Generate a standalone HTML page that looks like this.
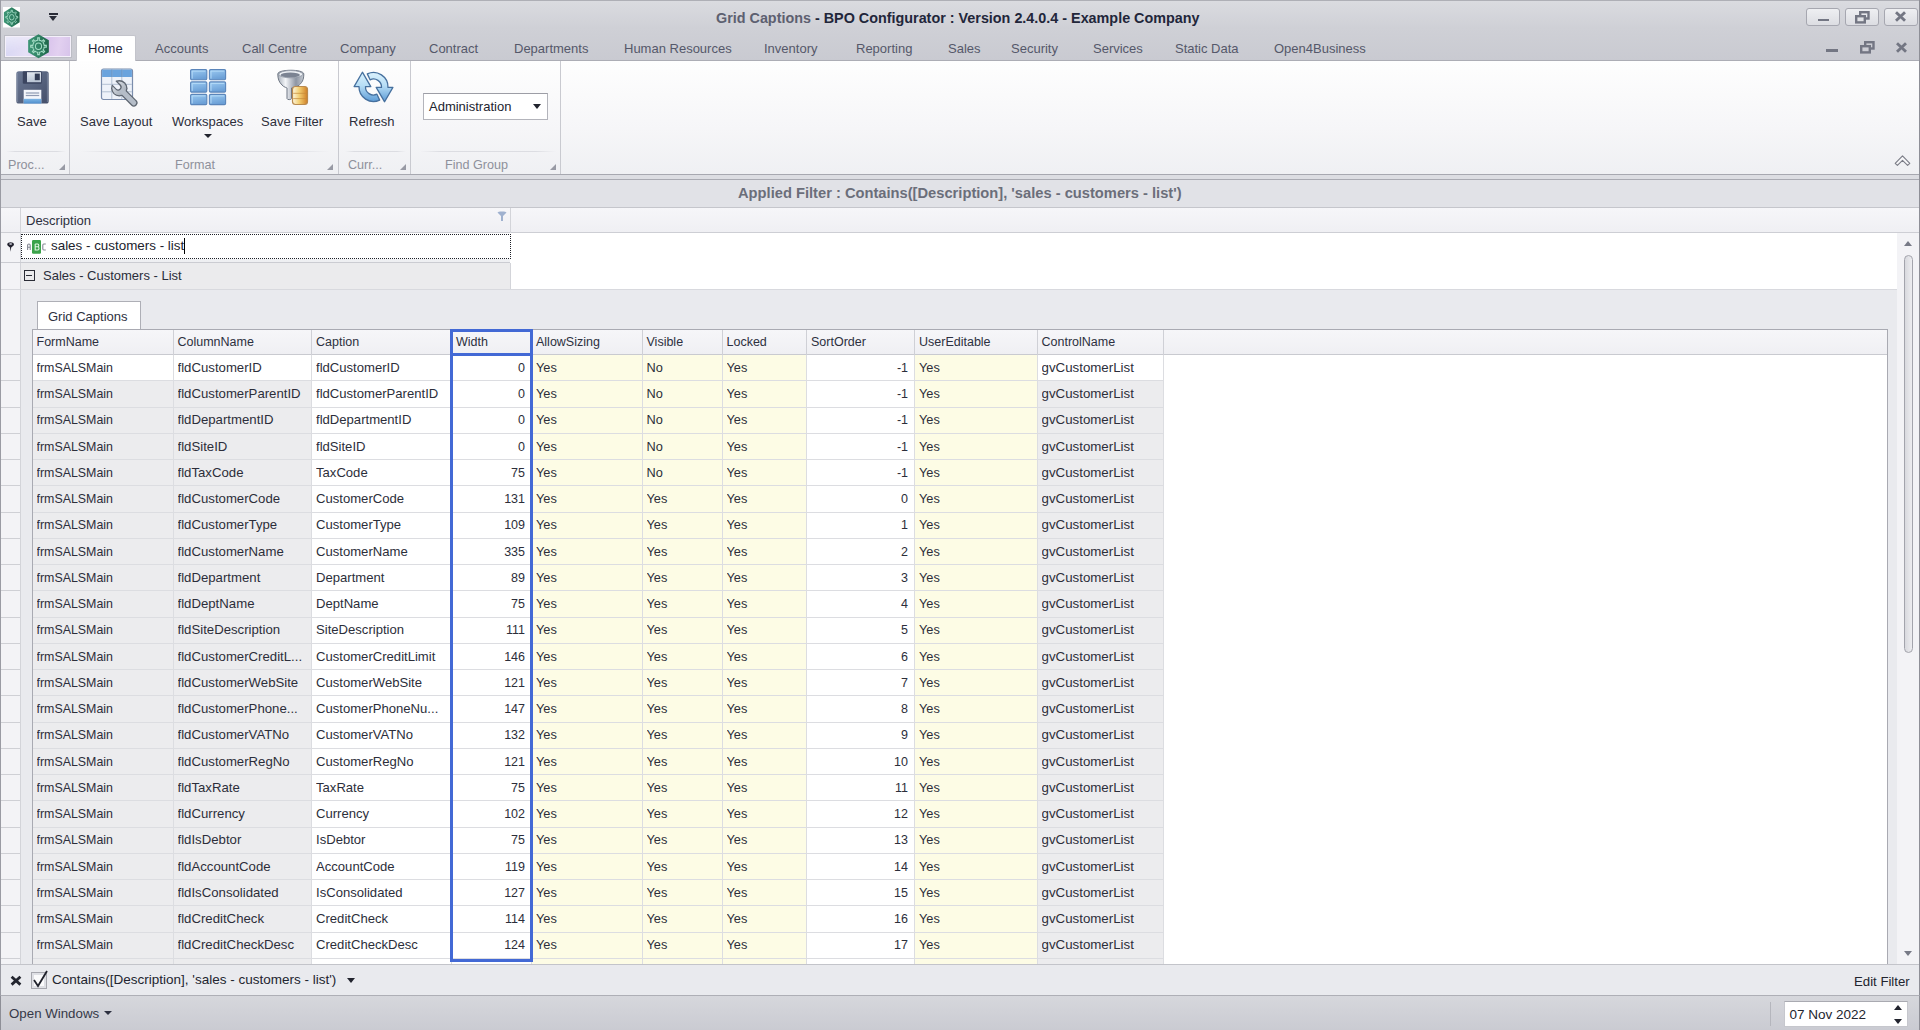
<!DOCTYPE html><html><head><meta charset="utf-8"><style>
*{box-sizing:border-box;margin:0;padding:0}
html,body{width:1920px;height:1030px;overflow:hidden;background:#e9eaee;font-family:"Liberation Sans",sans-serif;color:#20222c}
.abs{position:absolute}
.t{position:absolute;white-space:nowrap;line-height:1}
#title{left:0;top:0;width:1920px;height:61px;background:linear-gradient(#dadbe0,#cfd0d6 45%,#c9cad1);border-top:1px solid #aeafb6;border-left:1px solid #a9aab1;border-right:1px solid #a9aab1}
#tabline{left:0;top:60px;width:1920px;height:1px;background:#acadb5}
.tab{font-size:13px;color:#55586a;top:42px}
#ribbon{left:1px;top:61px;width:1918px;height:113px;background:linear-gradient(#fefefe,#f6f6f8 60%,#eff0f3)}
.rl{font-size:13px;color:#2d2f3b}
.gl{font-size:12.6px;color:#8e909b}
.sep{position:absolute;top:61px;width:1px;height:113px;background:#c9cad0}
.lsep{position:absolute;top:151px;height:1px;background:linear-gradient(90deg,rgba(220,221,226,0),#dcdde2 15%,#dcdde2 85%,rgba(220,221,226,0))}
.launch{position:absolute;width:0;height:0;border-left:6px solid transparent;border-bottom:6px solid #989aa4}
.cell{position:absolute;font-size:12.5px;white-space:nowrap;line-height:1;color:#2c2e3a}
</style></head><body>
<div id="title" class="abs"></div>
<div id="tabline" class="abs"></div>
<svg class="abs" style="left:2.5px;top:7px" width="17.5" height="20.5" viewBox="0 0 24 24" preserveAspectRatio="none"><rect x="0" y="0" width="24" height="24" fill="#fff"/><defs><linearGradient id="g1" x1="0" x2="1"><stop offset="0" stop-color="#3f9677"/><stop offset=".55" stop-color="#2e8062"/><stop offset="1" stop-color="#1d6448"/></linearGradient></defs><polygon points="12,0.3 22.8,6.2 22.8,17.8 12,23.7 1.2,17.8 1.2,6.2" fill="url(#g1)"/><polygon points="10.10,6.31 11.16,6.06 11.14,3.84 12.86,3.84 12.84,6.06 13.90,6.31 14.68,6.63 15.61,7.21 17.16,5.63 18.37,6.84 16.79,8.39 17.37,9.32 17.69,10.10 17.94,11.16 20.16,11.14 20.16,12.86 17.94,12.84 17.69,13.90 17.37,14.68 16.79,15.61 18.37,17.16 17.16,18.37 15.61,16.79 14.68,17.37 13.90,17.69 12.84,17.94 12.86,20.16 11.14,20.16 11.16,17.94 10.10,17.69 9.32,17.37 8.39,16.79 6.84,18.37 5.63,17.16 7.21,15.61 6.63,14.68 6.31,13.90 6.06,12.84 3.84,12.86 3.84,11.14 6.06,11.16 6.31,10.10 6.63,9.32 7.21,8.39 5.63,6.84 6.84,5.63 8.39,7.21 9.32,6.63" fill="none" stroke="#a4dcc5" stroke-width="1.1"/><circle cx="12" cy="12" r="3.2" fill="none" stroke="#a4dcc5" stroke-width="1.1"/></svg>
<div class="abs" style="left:49px;top:13px;width:9px;height:2px;background:#2a2c38"></div>
<div class="abs" style="left:49px;top:16px;width:0;height:0;border-left:4.5px solid transparent;border-right:4.5px solid transparent;border-top:5px solid #2a2c38"></div>
<div class="t" style="left:716px;top:10.5px;font-size:14.37px;font-weight:bold;color:#5d6070">Grid Captions <span style="color:#22263a">- BPO Configurator : Version 2.4.0.4 - Example Company</span></div>
<div class="abs" style="left:1806px;top:8px;width:34px;height:18px;border:1px solid #a6a7b0;border-radius:3px;background:linear-gradient(#eeeff2,#dcdde2)"></div>
<div class="abs" style="left:1844.5px;top:8px;width:34px;height:18px;border:1px solid #a6a7b0;border-radius:3px;background:linear-gradient(#eeeff2,#dcdde2)"></div>
<div class="abs" style="left:1883.5px;top:8px;width:34px;height:18px;border:1px solid #a6a7b0;border-radius:3px;background:linear-gradient(#eeeff2,#dcdde2)"></div>
<div class="abs" style="left:1817.5px;top:18.5px;width:11.5px;height:2.5px;background:#737683"></div>
<svg class="abs" style="left:1854px;top:10px" width="16" height="14"><rect x="6.2" y="2.2" width="8.3" height="6.3" fill="none" stroke="#737683" stroke-width="2.4"/><rect x="2.2" y="6.2" width="8.6" height="6.2" fill="#e2e3e7" stroke="#737683" stroke-width="2.4"/></svg>
<svg class="abs" style="left:1894px;top:11px" width="13" height="11"><path d="M2 1.3 L11 9.7 M11 1.3 L2 9.7" stroke="#737683" stroke-width="2.9"/></svg>
<div class="abs" style="left:1826px;top:49px;width:11.5px;height:2.5px;background:#737683"></div>
<svg class="abs" style="left:1859px;top:40px" width="16" height="14"><rect x="6.2" y="2.2" width="8.3" height="6.3" fill="none" stroke="#737683" stroke-width="2.4"/><rect x="2.2" y="6.2" width="8.6" height="6.2" fill="#cdced5" stroke="#737683" stroke-width="2.4"/></svg>
<svg class="abs" style="left:1895px;top:41.5px" width="13" height="11"><path d="M2 1.3 L11 9.7 M11 1.3 L2 9.7" stroke="#737683" stroke-width="2.9"/></svg>
<div class="abs" style="left:3.5px;top:34.5px;width:68px;height:23.5px;border:1px solid #bcbdc5;box-shadow:inset 0 0 0 1px #f4f0fa;background:linear-gradient(160deg,rgba(255,255,255,.5),rgba(255,255,255,0) 40%),linear-gradient(100deg,#d7d6f4,#e6e0f6 35%,#d9c4ec 62%,#e2d0f0 80%,#d6c3ea)"></div>
<svg class="abs" style="left:27px;top:34px" width="23" height="24.5" viewBox="0 0 24 24" preserveAspectRatio="none"><defs><linearGradient id="g2" x1="0" x2="1"><stop offset="0" stop-color="#3f9677"/><stop offset=".55" stop-color="#2e8062"/><stop offset="1" stop-color="#1d6448"/></linearGradient></defs><polygon points="12,0.3 22.8,6.2 22.8,17.8 12,23.7 1.2,17.8 1.2,6.2" fill="url(#g2)"/><polygon points="10.10,6.31 11.16,6.06 11.14,3.84 12.86,3.84 12.84,6.06 13.90,6.31 14.68,6.63 15.61,7.21 17.16,5.63 18.37,6.84 16.79,8.39 17.37,9.32 17.69,10.10 17.94,11.16 20.16,11.14 20.16,12.86 17.94,12.84 17.69,13.90 17.37,14.68 16.79,15.61 18.37,17.16 17.16,18.37 15.61,16.79 14.68,17.37 13.90,17.69 12.84,17.94 12.86,20.16 11.14,20.16 11.16,17.94 10.10,17.69 9.32,17.37 8.39,16.79 6.84,18.37 5.63,17.16 7.21,15.61 6.63,14.68 6.31,13.90 6.06,12.84 3.84,12.86 3.84,11.14 6.06,11.16 6.31,10.10 6.63,9.32 7.21,8.39 5.63,6.84 6.84,5.63 8.39,7.21 9.32,6.63" fill="none" stroke="#a4dcc5" stroke-width="1.1"/><circle cx="12" cy="12" r="3.2" fill="none" stroke="#a4dcc5" stroke-width="1.1"/></svg>
<div class="abs" style="left:75.5px;top:34.5px;width:60px;height:27px;background:#fff;border:1px solid #c3c4cb;border-bottom:none;border-radius:2px 2px 0 0"></div>
<div class="t tab" style="left:88px;color:#22263a">Home</div>
<div class="t tab" style="left:155px">Accounts</div>
<div class="t tab" style="left:242px">Call Centre</div>
<div class="t tab" style="left:340px">Company</div>
<div class="t tab" style="left:429px">Contract</div>
<div class="t tab" style="left:514px">Departments</div>
<div class="t tab" style="left:624px">Human Resources</div>
<div class="t tab" style="left:764px">Inventory</div>
<div class="t tab" style="left:856px">Reporting</div>
<div class="t tab" style="left:948px">Sales</div>
<div class="t tab" style="left:1011px">Security</div>
<div class="t tab" style="left:1093px">Services</div>
<div class="t tab" style="left:1175px">Static Data</div>
<div class="t tab" style="left:1274px">Open4Business</div>
<div id="ribbon" class="abs"></div>
<div class="sep" style="left:69px"></div>
<div class="sep" style="left:338px"></div>
<div class="sep" style="left:410px"></div>
<div class="sep" style="left:560px"></div>
<div class="abs" style="left:0;top:174px;width:1920px;height:1px;background:#a7a8b0"></div>
<div class="abs" style="left:0;top:175px;width:1920px;height:4px;background:#dcdde2"></div>
<div class="abs" style="left:0;top:179px;width:1920px;height:1px;background:#a9aab2"></div>
<div class="lsep" style="left:6px;width:60px"></div>
<div class="lsep" style="left:80px;width:250px"></div>
<div class="lsep" style="left:345px;width:61px"></div>
<div class="lsep" style="left:420px;width:136px"></div>
<div class="launch" style="left:59px;top:164px"></div>
<div class="launch" style="left:327px;top:164px"></div>
<div class="launch" style="left:400px;top:164px"></div>
<div class="launch" style="left:550px;top:164px"></div>
<div class="t gl" style="left:8px;top:158.5px">Proc...</div>
<div class="t gl" style="left:175px;top:158.5px">Format</div>
<div class="t gl" style="left:348px;top:158.5px">Curr...</div>
<div class="t gl" style="left:445px;top:158.5px">Find Group</div>
<div class="t rl" style="left:17px;top:115px">Save</div>
<div class="t rl" style="left:80px;top:115px">Save Layout</div>
<div class="t rl" style="left:172px;top:115px">Workspaces</div>
<div class="t rl" style="left:261px;top:115px">Save Filter</div>
<div class="t rl" style="left:349px;top:115px">Refresh</div>
<div class="abs" style="left:204px;top:134px;width:0;height:0;border-left:4px solid transparent;border-right:4px solid transparent;border-top:4.5px solid #22242e"></div>
<div class="abs" style="left:422.5px;top:92.5px;width:125px;height:27px;border:1px solid #b3b4bb;border-top-color:#9d9ea6;background:#fff"></div>
<div class="t" style="left:429px;top:100px;font-size:13px;color:#22242e">Administration</div>
<div class="abs" style="left:533px;top:104px;width:0;height:0;border-left:4px solid transparent;border-right:4px solid transparent;border-top:5px solid #22242e"></div>
<svg class="abs" style="left:1893px;top:153px" width="19" height="15"><path d="M2.2 10.3 L9.5 2.8 L16.8 10.3 L14.6 12.4 L9.5 7.4 L4.4 12.4 Z" fill="#f6f6f8" stroke="#7a7c86" stroke-width="1.1" stroke-linejoin="round"/></svg>
<svg class="abs" style="left:16px;top:71px" width="33" height="33" viewBox="0 0 33 33">
<defs><linearGradient id="fl" x1="0" y1="0" x2="1" y2="1"><stop offset="0" stop-color="#6b7894"/><stop offset=".5" stop-color="#58647f"/><stop offset="1" stop-color="#444e69"/></linearGradient>
<linearGradient id="sh" x1="0" y1="0" x2="0" y2="1"><stop offset="0" stop-color="#e2e8f0"/><stop offset="1" stop-color="#b9c4d4"/></linearGradient>
<linearGradient id="bl" x1="0" y1="0" x2="0" y2="1"><stop offset="0" stop-color="#7db6e6"/><stop offset="1" stop-color="#4f8dcc"/></linearGradient></defs>
<rect x="0.3" y="0.2" width="32.4" height="32.4" rx="2.6" fill="url(#fl)"/>
<path d="M1.6 2 V31 M31.4 2 V31" stroke="#8c98b0" stroke-width="0.8" opacity=".7"/>
<rect x="6.8" y="0.2" width="19" height="12.6" rx="1" fill="#3b4560"/>
<rect x="11" y="1.2" width="14" height="10" fill="url(#sh)"/>
<rect x="18.8" y="2.6" width="5" height="6.6" fill="#333c55"/>
<rect x="7.7" y="18.8" width="17.6" height="13.8" fill="#f3f6fb"/>
<rect x="9.8" y="21.4" width="13.4" height="1.2" fill="#8f9ab2"/>
<rect x="9.8" y="23.9" width="13.4" height="1.2" fill="#8f9ab2"/>
<rect x="7.7" y="27.8" width="17.6" height="4.8" fill="url(#bl)"/>
</svg>
<svg class="abs" style="left:100px;top:68px" width="40" height="40" viewBox="0 0 40 40">
<defs>
<linearGradient id="wr" x1="0" y1="0" x2="1" y2="1"><stop offset="0" stop-color="#e4e8ee"/><stop offset="1" stop-color="#9ba4af"/></linearGradient>
<mask id="m1" maskUnits="userSpaceOnUse" x="0" y="0" width="40" height="40"><rect width="40" height="40" fill="#fff"/><rect x="-2.3" y="-13" width="4.6" height="13.5" rx="2.3" fill="#000" transform="translate(19.3 20.3) rotate(-45)"/></mask>
<mask id="m2" maskUnits="userSpaceOnUse" x="0" y="0" width="40" height="40"><rect width="40" height="40" fill="#fff"/><rect x="-3.5" y="-14" width="7" height="15.8" rx="3.5" fill="#000" transform="translate(19.3 20.3) rotate(-45)"/></mask>
</defs>
<rect x="1.5" y="1" width="31" height="30.5" rx="2" fill="#eef2f9" stroke="#7b8dac" stroke-width="1.2"/>
<rect x="2.1" y="1.6" width="29.8" height="7.4" fill="#6aa3dd"/>
<path d="M11.8 1.6 V30.9 M21.8 1.6 V30.9 M2.1 16.3 H31.9 M2.1 23.8 H31.9" stroke="#b3c0d2" stroke-width="1"/>
<path d="M11.8 1.6 V9 M21.8 1.6 V9" stroke="#5a8fc8" stroke-width="1"/>
<g mask="url(#m1)"><circle cx="19.3" cy="20.3" r="8.2" fill="#5d6570"/><path d="M20 21 L33.8 34.8" stroke="#5d6570" stroke-width="7.4" stroke-linecap="round"/></g>
<g mask="url(#m2)"><circle cx="19.3" cy="20.3" r="6.9" fill="url(#wr)"/><path d="M20 21 L33.8 34.8" stroke="#b5bdc8" stroke-width="4.9" stroke-linecap="round"/></g>
</svg>
<svg class="abs" style="left:190px;top:69px" width="37" height="37"><defs><linearGradient id="wsg" x1="0" y1="0" x2="0.3" y2="1"><stop offset="0" stop-color="#9ccbf2"/><stop offset="1" stop-color="#6b9fd6"/></linearGradient></defs><rect x="0.6" y="0.6" width="16.2" height="10.2" rx="1.2" fill="url(#wsg)" stroke="#5a85ba" stroke-width="1.1"/><path d="M2.2 9.6 V2.1 H15.4" fill="none" stroke="#b8dcf8" stroke-width="0.9"/><rect x="19.4" y="0.6" width="16.2" height="10.2" rx="1.2" fill="url(#wsg)" stroke="#5a85ba" stroke-width="1.1"/><path d="M21.0 9.6 V2.1 H34.2" fill="none" stroke="#b8dcf8" stroke-width="0.9"/><rect x="0.6" y="12.9" width="16.2" height="10.2" rx="1.2" fill="url(#wsg)" stroke="#5a85ba" stroke-width="1.1"/><path d="M2.2 21.9 V14.4 H15.4" fill="none" stroke="#b8dcf8" stroke-width="0.9"/><rect x="19.4" y="12.9" width="16.2" height="10.2" rx="1.2" fill="url(#wsg)" stroke="#5a85ba" stroke-width="1.1"/><path d="M21.0 21.9 V14.4 H34.2" fill="none" stroke="#b8dcf8" stroke-width="0.9"/><rect x="0.6" y="25.4" width="16.2" height="10.2" rx="1.2" fill="url(#wsg)" stroke="#5a85ba" stroke-width="1.1"/><path d="M2.2 34.4 V26.9 H15.4" fill="none" stroke="#b8dcf8" stroke-width="0.9"/><rect x="19.4" y="25.4" width="16.2" height="10.2" rx="1.2" fill="url(#wsg)" stroke="#5a85ba" stroke-width="1.1"/><path d="M21.0 34.4 V26.9 H34.2" fill="none" stroke="#b8dcf8" stroke-width="0.9"/></svg>
<svg class="abs" style="left:276px;top:68px" width="34" height="39" viewBox="0 0 34 39">
<defs><linearGradient id="fn" x1="0" x2="1"><stop offset="0" stop-color="#a9b0ba"/><stop offset=".3" stop-color="#f3f5f8"/><stop offset=".7" stop-color="#8d95a3"/><stop offset="1" stop-color="#c5cad2"/></linearGradient>
<linearGradient id="db" x1="0" x2="1"><stop offset="0" stop-color="#fdf6df"/><stop offset=".45" stop-color="#f3cf72"/><stop offset="1" stop-color="#cf7e25"/></linearGradient></defs>
<path d="M1.8 6 C1.8 1 27.8 1 27.8 6 C27.8 12 26 15 22 18 C18 20 15.5 19.5 15.5 20 L15.5 30.5 C15.5 32 11 32 11 30.5 L11 20 C11 19.5 8 19.5 6 17 C3 14 1.8 11 1.8 6 Z" fill="url(#fn)" stroke="#6f7784" stroke-width="1"/>
<ellipse cx="14.8" cy="6.2" rx="12" ry="3.6" fill="#eef1f5" stroke="#8a92a0" stroke-width="0.8"/>
<ellipse cx="14.3" cy="7" rx="9.6" ry="2.4" fill="#7b8392"/>
<rect x="16.5" y="18.5" width="15" height="18" rx="3" fill="url(#db)" stroke="#b98a4e" stroke-width="1.2"/>
<path d="M17.2 25.3 H30.8 M17.2 30.6 H30.8" stroke="#c68a3a" stroke-width="0.9" opacity=".8"/>
</svg>
<svg class="abs" style="left:350px;top:66px" width="48" height="42" viewBox="0 0 48 42">
<defs><linearGradient id="rf" gradientUnits="userSpaceOnUse" x1="0" y1="-15" x2="0" y2="15"><stop offset="0" stop-color="#dcf2fd"/><stop offset=".45" stop-color="#b7def6"/><stop offset="1" stop-color="#5b9ad5"/></linearGradient></defs>
<g transform="translate(23.5 21)" fill="url(#rf)" stroke="#46709e" stroke-width="1.3" stroke-linejoin="round">
<path d="M-19.4 -0.4 L-11.1 -14.8 L-2.7 -0.4 L-8 -0.4 A8 8 0 0 0 3.4 7.2 L6.2 13.1 A14.5 14.5 0 0 1 -14.5 -0.4 Z"/>
<path d="M19.4 0.4 L11.1 14.8 L2.7 0.4 L8 0.4 A8 8 0 0 0 -3.4 -7.2 L-6.2 -13.1 A14.5 14.5 0 0 1 14.5 0.4 Z"/>
</g>
</svg>
<div class="abs" style="left:0;top:180px;width:1920px;height:28px;background:#e1e2e7;border-left:1px solid #8e8f97;border-right:1px solid #8e8f97"></div>
<div class="t" style="left:738px;top:186px;font-size:14.7px;font-weight:bold;color:#6b6e7a">Applied Filter : Contains([Description], 'sales - customers - list')</div>
<div class="abs" style="left:0;top:207px;width:1920px;height:1px;background:#c5c6cc"></div>
<div class="abs" style="left:1px;top:208px;width:1918px;height:25px;background:linear-gradient(#f6f6f9,#efeff3)"></div>
<div class="abs" style="left:1px;top:232px;width:1918px;height:1px;background:#cdced4"></div>
<div class="abs" style="left:20px;top:208px;width:1px;height:25px;background:#d3d4d9"></div>
<div class="abs" style="left:510px;top:208px;width:1px;height:25px;background:#d3d4d9"></div>
<div class="t" style="left:26px;top:214px;font-size:13px;color:#2d3040">Description</div>
<svg class="abs" style="left:497px;top:211px" width="10" height="11"><path d="M0.5 1.5 C0.5 0 9.5 0 9.5 1.5 L6 5 V10 H4 V5 Z" fill="#9fb1cf"/></svg>
<div class="abs" style="left:1px;top:233px;width:1896px;height:731px;background:#fff"></div>
<div class="abs" style="left:1px;top:233px;width:19px;height:731px;background:#f3f3f6"></div>
<div class="abs" style="left:20px;top:233px;width:1px;height:731px;background:#d3d4d9"></div>
<div class="abs" style="left:21px;top:233.5px;width:489.5px;height:25.5px;background:#fff"></div>
<div class="abs" style="left:21px;top:234px;width:489.5px;height:25px;border:1px dotted #1e2028"></div>
<div class="abs" style="left:21px;top:259px;width:489px;height:3.5px;background:#eeeff2"></div>
<div class="abs" style="left:1px;top:262.3px;width:509px;height:1px;background:#cbccd2"></div>
<svg class="abs" style="left:6px;top:240px" width="10" height="13"><path d="M1.2 4.4 C1.2 1.6 8 1.6 8 4.4 C8 6 5.6 6.6 5.2 7.4 L4.6 11.8 L4 7.4 C3.6 6.6 1.2 6 1.2 4.4 Z" fill="#22222e"/><ellipse cx="4.6" cy="3.9" rx="1.5" ry="0.75" fill="#dcdce6"/></svg>
<svg class="abs" style="left:26px;top:239px" width="22" height="16"><rect x="6" y="1" width="9" height="13.7" rx="1.2" fill="#3ba24a"/><path d="M1.6 11 L1.6 6.2 Q1.6 5 2.9 5 Q4.2 5 4.2 6.2 L4.2 11 M1.6 8.2 H4.2" fill="none" stroke="#858894" stroke-width="1.1"/><path d="M9.2 5 H11.6 Q12.8 5 12.8 6.4 Q12.8 7.8 11.6 7.8 H9.2 M9.2 7.8 H11.8 Q13 7.8 13 9.4 Q13 11 11.8 11 H9.2 Z M9.2 5 V11" fill="none" stroke="#e3f6e3" stroke-width="1.1"/><path d="M19.8 5 H17.8 Q16.8 5 16.8 6.2 V9.8 Q16.8 11 17.8 11 H19.8" fill="none" stroke="#858894" stroke-width="1.1"/></svg>
<div class="t" style="left:51px;top:239px;font-size:13.4px;color:#20222c">sales - customers - list</div>
<div class="abs" style="left:183.5px;top:238px;width:1px;height:16px;background:#000"></div>
<div class="abs" style="left:21px;top:263.3px;width:489px;height:25.5px;background:#ebebed"></div>
<div class="abs" style="left:510px;top:263px;width:1px;height:26px;background:#d3d4d9"></div>
<div class="abs" style="left:23.5px;top:269.7px;width:11.8px;height:11.8px;border:1.3px solid #2a2c36"></div>
<div class="abs" style="left:26.3px;top:275px;width:6.2px;height:1.3px;background:#2a2c36"></div>
<div class="t" style="left:43px;top:269px;font-size:13px;color:#2a2d3a">Sales - Customers - List</div>
<div class="abs" style="left:1px;top:288.5px;width:1896px;height:1px;background:#d8d9de"></div>
<div class="abs" style="left:21px;top:289.5px;width:1876px;height:675px;background:#e9eaee"></div>
<div class="abs" style="left:36.5px;top:301px;width:104.5px;height:29px;background:#fff;border:1px solid #aeafb6;border-bottom:none"></div>
<div class="t" style="left:48px;top:310px;font-size:13px;color:#2d3040">Grid Captions</div>
<div class="abs" style="left:32px;top:329px;width:1856px;height:636px;background:#fff;border:1px solid #a9aab2;border-bottom:none"></div>
<div class="abs" style="left:33px;top:330px;width:1854px;height:24.5px;background:linear-gradient(#f6f6f9,#efeff3)"></div>
<div class="abs" style="left:33px;top:354px;width:1854px;height:1px;background:#c9cad0"></div>
<div class="abs" style="left:532px;top:355.00px;width:109.5px;height:26.25px;background:#fdfce5"></div>
<div class="abs" style="left:642.5px;top:355.00px;width:79.0px;height:26.25px;background:#fdfce5"></div>
<div class="abs" style="left:722.5px;top:355.00px;width:83.5px;height:26.25px;background:#fdfce5"></div>
<div class="abs" style="left:915px;top:355.00px;width:121.5px;height:26.25px;background:#fdfce5"></div>
<div class="abs" style="left:32.5px;top:381.25px;width:140.0px;height:26.25px;background:#ececee"></div>
<div class="abs" style="left:173.5px;top:381.25px;width:137.5px;height:26.25px;background:#ececee"></div>
<div class="abs" style="left:532px;top:381.25px;width:109.5px;height:26.25px;background:#fdfce5"></div>
<div class="abs" style="left:642.5px;top:381.25px;width:79.0px;height:26.25px;background:#fdfce5"></div>
<div class="abs" style="left:722.5px;top:381.25px;width:83.5px;height:26.25px;background:#fdfce5"></div>
<div class="abs" style="left:915px;top:381.25px;width:121.5px;height:26.25px;background:#fdfce5"></div>
<div class="abs" style="left:1037.5px;top:381.25px;width:125.0px;height:26.25px;background:#ececee"></div>
<div class="abs" style="left:32.5px;top:407.50px;width:140.0px;height:26.25px;background:#ececee"></div>
<div class="abs" style="left:173.5px;top:407.50px;width:137.5px;height:26.25px;background:#ececee"></div>
<div class="abs" style="left:532px;top:407.50px;width:109.5px;height:26.25px;background:#fdfce5"></div>
<div class="abs" style="left:642.5px;top:407.50px;width:79.0px;height:26.25px;background:#fdfce5"></div>
<div class="abs" style="left:722.5px;top:407.50px;width:83.5px;height:26.25px;background:#fdfce5"></div>
<div class="abs" style="left:915px;top:407.50px;width:121.5px;height:26.25px;background:#fdfce5"></div>
<div class="abs" style="left:1037.5px;top:407.50px;width:125.0px;height:26.25px;background:#ececee"></div>
<div class="abs" style="left:32.5px;top:433.75px;width:140.0px;height:26.25px;background:#ececee"></div>
<div class="abs" style="left:173.5px;top:433.75px;width:137.5px;height:26.25px;background:#ececee"></div>
<div class="abs" style="left:532px;top:433.75px;width:109.5px;height:26.25px;background:#fdfce5"></div>
<div class="abs" style="left:642.5px;top:433.75px;width:79.0px;height:26.25px;background:#fdfce5"></div>
<div class="abs" style="left:722.5px;top:433.75px;width:83.5px;height:26.25px;background:#fdfce5"></div>
<div class="abs" style="left:915px;top:433.75px;width:121.5px;height:26.25px;background:#fdfce5"></div>
<div class="abs" style="left:1037.5px;top:433.75px;width:125.0px;height:26.25px;background:#ececee"></div>
<div class="abs" style="left:32.5px;top:460.00px;width:140.0px;height:26.25px;background:#ececee"></div>
<div class="abs" style="left:173.5px;top:460.00px;width:137.5px;height:26.25px;background:#ececee"></div>
<div class="abs" style="left:532px;top:460.00px;width:109.5px;height:26.25px;background:#fdfce5"></div>
<div class="abs" style="left:642.5px;top:460.00px;width:79.0px;height:26.25px;background:#fdfce5"></div>
<div class="abs" style="left:722.5px;top:460.00px;width:83.5px;height:26.25px;background:#fdfce5"></div>
<div class="abs" style="left:915px;top:460.00px;width:121.5px;height:26.25px;background:#fdfce5"></div>
<div class="abs" style="left:1037.5px;top:460.00px;width:125.0px;height:26.25px;background:#ececee"></div>
<div class="abs" style="left:32.5px;top:486.25px;width:140.0px;height:26.25px;background:#ececee"></div>
<div class="abs" style="left:173.5px;top:486.25px;width:137.5px;height:26.25px;background:#ececee"></div>
<div class="abs" style="left:532px;top:486.25px;width:109.5px;height:26.25px;background:#fdfce5"></div>
<div class="abs" style="left:642.5px;top:486.25px;width:79.0px;height:26.25px;background:#fdfce5"></div>
<div class="abs" style="left:722.5px;top:486.25px;width:83.5px;height:26.25px;background:#fdfce5"></div>
<div class="abs" style="left:915px;top:486.25px;width:121.5px;height:26.25px;background:#fdfce5"></div>
<div class="abs" style="left:1037.5px;top:486.25px;width:125.0px;height:26.25px;background:#ececee"></div>
<div class="abs" style="left:32.5px;top:512.50px;width:140.0px;height:26.25px;background:#ececee"></div>
<div class="abs" style="left:173.5px;top:512.50px;width:137.5px;height:26.25px;background:#ececee"></div>
<div class="abs" style="left:532px;top:512.50px;width:109.5px;height:26.25px;background:#fdfce5"></div>
<div class="abs" style="left:642.5px;top:512.50px;width:79.0px;height:26.25px;background:#fdfce5"></div>
<div class="abs" style="left:722.5px;top:512.50px;width:83.5px;height:26.25px;background:#fdfce5"></div>
<div class="abs" style="left:915px;top:512.50px;width:121.5px;height:26.25px;background:#fdfce5"></div>
<div class="abs" style="left:1037.5px;top:512.50px;width:125.0px;height:26.25px;background:#ececee"></div>
<div class="abs" style="left:32.5px;top:538.75px;width:140.0px;height:26.25px;background:#ececee"></div>
<div class="abs" style="left:173.5px;top:538.75px;width:137.5px;height:26.25px;background:#ececee"></div>
<div class="abs" style="left:532px;top:538.75px;width:109.5px;height:26.25px;background:#fdfce5"></div>
<div class="abs" style="left:642.5px;top:538.75px;width:79.0px;height:26.25px;background:#fdfce5"></div>
<div class="abs" style="left:722.5px;top:538.75px;width:83.5px;height:26.25px;background:#fdfce5"></div>
<div class="abs" style="left:915px;top:538.75px;width:121.5px;height:26.25px;background:#fdfce5"></div>
<div class="abs" style="left:1037.5px;top:538.75px;width:125.0px;height:26.25px;background:#ececee"></div>
<div class="abs" style="left:32.5px;top:565.00px;width:140.0px;height:26.25px;background:#ececee"></div>
<div class="abs" style="left:173.5px;top:565.00px;width:137.5px;height:26.25px;background:#ececee"></div>
<div class="abs" style="left:532px;top:565.00px;width:109.5px;height:26.25px;background:#fdfce5"></div>
<div class="abs" style="left:642.5px;top:565.00px;width:79.0px;height:26.25px;background:#fdfce5"></div>
<div class="abs" style="left:722.5px;top:565.00px;width:83.5px;height:26.25px;background:#fdfce5"></div>
<div class="abs" style="left:915px;top:565.00px;width:121.5px;height:26.25px;background:#fdfce5"></div>
<div class="abs" style="left:1037.5px;top:565.00px;width:125.0px;height:26.25px;background:#ececee"></div>
<div class="abs" style="left:32.5px;top:591.25px;width:140.0px;height:26.25px;background:#ececee"></div>
<div class="abs" style="left:173.5px;top:591.25px;width:137.5px;height:26.25px;background:#ececee"></div>
<div class="abs" style="left:532px;top:591.25px;width:109.5px;height:26.25px;background:#fdfce5"></div>
<div class="abs" style="left:642.5px;top:591.25px;width:79.0px;height:26.25px;background:#fdfce5"></div>
<div class="abs" style="left:722.5px;top:591.25px;width:83.5px;height:26.25px;background:#fdfce5"></div>
<div class="abs" style="left:915px;top:591.25px;width:121.5px;height:26.25px;background:#fdfce5"></div>
<div class="abs" style="left:1037.5px;top:591.25px;width:125.0px;height:26.25px;background:#ececee"></div>
<div class="abs" style="left:32.5px;top:617.50px;width:140.0px;height:26.25px;background:#ececee"></div>
<div class="abs" style="left:173.5px;top:617.50px;width:137.5px;height:26.25px;background:#ececee"></div>
<div class="abs" style="left:532px;top:617.50px;width:109.5px;height:26.25px;background:#fdfce5"></div>
<div class="abs" style="left:642.5px;top:617.50px;width:79.0px;height:26.25px;background:#fdfce5"></div>
<div class="abs" style="left:722.5px;top:617.50px;width:83.5px;height:26.25px;background:#fdfce5"></div>
<div class="abs" style="left:915px;top:617.50px;width:121.5px;height:26.25px;background:#fdfce5"></div>
<div class="abs" style="left:1037.5px;top:617.50px;width:125.0px;height:26.25px;background:#ececee"></div>
<div class="abs" style="left:32.5px;top:643.75px;width:140.0px;height:26.25px;background:#ececee"></div>
<div class="abs" style="left:173.5px;top:643.75px;width:137.5px;height:26.25px;background:#ececee"></div>
<div class="abs" style="left:532px;top:643.75px;width:109.5px;height:26.25px;background:#fdfce5"></div>
<div class="abs" style="left:642.5px;top:643.75px;width:79.0px;height:26.25px;background:#fdfce5"></div>
<div class="abs" style="left:722.5px;top:643.75px;width:83.5px;height:26.25px;background:#fdfce5"></div>
<div class="abs" style="left:915px;top:643.75px;width:121.5px;height:26.25px;background:#fdfce5"></div>
<div class="abs" style="left:1037.5px;top:643.75px;width:125.0px;height:26.25px;background:#ececee"></div>
<div class="abs" style="left:32.5px;top:670.00px;width:140.0px;height:26.25px;background:#ececee"></div>
<div class="abs" style="left:173.5px;top:670.00px;width:137.5px;height:26.25px;background:#ececee"></div>
<div class="abs" style="left:532px;top:670.00px;width:109.5px;height:26.25px;background:#fdfce5"></div>
<div class="abs" style="left:642.5px;top:670.00px;width:79.0px;height:26.25px;background:#fdfce5"></div>
<div class="abs" style="left:722.5px;top:670.00px;width:83.5px;height:26.25px;background:#fdfce5"></div>
<div class="abs" style="left:915px;top:670.00px;width:121.5px;height:26.25px;background:#fdfce5"></div>
<div class="abs" style="left:1037.5px;top:670.00px;width:125.0px;height:26.25px;background:#ececee"></div>
<div class="abs" style="left:32.5px;top:696.25px;width:140.0px;height:26.25px;background:#ececee"></div>
<div class="abs" style="left:173.5px;top:696.25px;width:137.5px;height:26.25px;background:#ececee"></div>
<div class="abs" style="left:532px;top:696.25px;width:109.5px;height:26.25px;background:#fdfce5"></div>
<div class="abs" style="left:642.5px;top:696.25px;width:79.0px;height:26.25px;background:#fdfce5"></div>
<div class="abs" style="left:722.5px;top:696.25px;width:83.5px;height:26.25px;background:#fdfce5"></div>
<div class="abs" style="left:915px;top:696.25px;width:121.5px;height:26.25px;background:#fdfce5"></div>
<div class="abs" style="left:1037.5px;top:696.25px;width:125.0px;height:26.25px;background:#ececee"></div>
<div class="abs" style="left:32.5px;top:722.50px;width:140.0px;height:26.25px;background:#ececee"></div>
<div class="abs" style="left:173.5px;top:722.50px;width:137.5px;height:26.25px;background:#ececee"></div>
<div class="abs" style="left:532px;top:722.50px;width:109.5px;height:26.25px;background:#fdfce5"></div>
<div class="abs" style="left:642.5px;top:722.50px;width:79.0px;height:26.25px;background:#fdfce5"></div>
<div class="abs" style="left:722.5px;top:722.50px;width:83.5px;height:26.25px;background:#fdfce5"></div>
<div class="abs" style="left:915px;top:722.50px;width:121.5px;height:26.25px;background:#fdfce5"></div>
<div class="abs" style="left:1037.5px;top:722.50px;width:125.0px;height:26.25px;background:#ececee"></div>
<div class="abs" style="left:32.5px;top:748.75px;width:140.0px;height:26.25px;background:#ececee"></div>
<div class="abs" style="left:173.5px;top:748.75px;width:137.5px;height:26.25px;background:#ececee"></div>
<div class="abs" style="left:532px;top:748.75px;width:109.5px;height:26.25px;background:#fdfce5"></div>
<div class="abs" style="left:642.5px;top:748.75px;width:79.0px;height:26.25px;background:#fdfce5"></div>
<div class="abs" style="left:722.5px;top:748.75px;width:83.5px;height:26.25px;background:#fdfce5"></div>
<div class="abs" style="left:915px;top:748.75px;width:121.5px;height:26.25px;background:#fdfce5"></div>
<div class="abs" style="left:1037.5px;top:748.75px;width:125.0px;height:26.25px;background:#ececee"></div>
<div class="abs" style="left:32.5px;top:775.00px;width:140.0px;height:26.25px;background:#ececee"></div>
<div class="abs" style="left:173.5px;top:775.00px;width:137.5px;height:26.25px;background:#ececee"></div>
<div class="abs" style="left:532px;top:775.00px;width:109.5px;height:26.25px;background:#fdfce5"></div>
<div class="abs" style="left:642.5px;top:775.00px;width:79.0px;height:26.25px;background:#fdfce5"></div>
<div class="abs" style="left:722.5px;top:775.00px;width:83.5px;height:26.25px;background:#fdfce5"></div>
<div class="abs" style="left:915px;top:775.00px;width:121.5px;height:26.25px;background:#fdfce5"></div>
<div class="abs" style="left:1037.5px;top:775.00px;width:125.0px;height:26.25px;background:#ececee"></div>
<div class="abs" style="left:32.5px;top:801.25px;width:140.0px;height:26.25px;background:#ececee"></div>
<div class="abs" style="left:173.5px;top:801.25px;width:137.5px;height:26.25px;background:#ececee"></div>
<div class="abs" style="left:532px;top:801.25px;width:109.5px;height:26.25px;background:#fdfce5"></div>
<div class="abs" style="left:642.5px;top:801.25px;width:79.0px;height:26.25px;background:#fdfce5"></div>
<div class="abs" style="left:722.5px;top:801.25px;width:83.5px;height:26.25px;background:#fdfce5"></div>
<div class="abs" style="left:915px;top:801.25px;width:121.5px;height:26.25px;background:#fdfce5"></div>
<div class="abs" style="left:1037.5px;top:801.25px;width:125.0px;height:26.25px;background:#ececee"></div>
<div class="abs" style="left:32.5px;top:827.50px;width:140.0px;height:26.25px;background:#ececee"></div>
<div class="abs" style="left:173.5px;top:827.50px;width:137.5px;height:26.25px;background:#ececee"></div>
<div class="abs" style="left:532px;top:827.50px;width:109.5px;height:26.25px;background:#fdfce5"></div>
<div class="abs" style="left:642.5px;top:827.50px;width:79.0px;height:26.25px;background:#fdfce5"></div>
<div class="abs" style="left:722.5px;top:827.50px;width:83.5px;height:26.25px;background:#fdfce5"></div>
<div class="abs" style="left:915px;top:827.50px;width:121.5px;height:26.25px;background:#fdfce5"></div>
<div class="abs" style="left:1037.5px;top:827.50px;width:125.0px;height:26.25px;background:#ececee"></div>
<div class="abs" style="left:32.5px;top:853.75px;width:140.0px;height:26.25px;background:#ececee"></div>
<div class="abs" style="left:173.5px;top:853.75px;width:137.5px;height:26.25px;background:#ececee"></div>
<div class="abs" style="left:532px;top:853.75px;width:109.5px;height:26.25px;background:#fdfce5"></div>
<div class="abs" style="left:642.5px;top:853.75px;width:79.0px;height:26.25px;background:#fdfce5"></div>
<div class="abs" style="left:722.5px;top:853.75px;width:83.5px;height:26.25px;background:#fdfce5"></div>
<div class="abs" style="left:915px;top:853.75px;width:121.5px;height:26.25px;background:#fdfce5"></div>
<div class="abs" style="left:1037.5px;top:853.75px;width:125.0px;height:26.25px;background:#ececee"></div>
<div class="abs" style="left:32.5px;top:880.00px;width:140.0px;height:26.25px;background:#ececee"></div>
<div class="abs" style="left:173.5px;top:880.00px;width:137.5px;height:26.25px;background:#ececee"></div>
<div class="abs" style="left:532px;top:880.00px;width:109.5px;height:26.25px;background:#fdfce5"></div>
<div class="abs" style="left:642.5px;top:880.00px;width:79.0px;height:26.25px;background:#fdfce5"></div>
<div class="abs" style="left:722.5px;top:880.00px;width:83.5px;height:26.25px;background:#fdfce5"></div>
<div class="abs" style="left:915px;top:880.00px;width:121.5px;height:26.25px;background:#fdfce5"></div>
<div class="abs" style="left:1037.5px;top:880.00px;width:125.0px;height:26.25px;background:#ececee"></div>
<div class="abs" style="left:32.5px;top:906.25px;width:140.0px;height:26.25px;background:#ececee"></div>
<div class="abs" style="left:173.5px;top:906.25px;width:137.5px;height:26.25px;background:#ececee"></div>
<div class="abs" style="left:532px;top:906.25px;width:109.5px;height:26.25px;background:#fdfce5"></div>
<div class="abs" style="left:642.5px;top:906.25px;width:79.0px;height:26.25px;background:#fdfce5"></div>
<div class="abs" style="left:722.5px;top:906.25px;width:83.5px;height:26.25px;background:#fdfce5"></div>
<div class="abs" style="left:915px;top:906.25px;width:121.5px;height:26.25px;background:#fdfce5"></div>
<div class="abs" style="left:1037.5px;top:906.25px;width:125.0px;height:26.25px;background:#ececee"></div>
<div class="abs" style="left:32.5px;top:932.50px;width:140.0px;height:26.25px;background:#ececee"></div>
<div class="abs" style="left:173.5px;top:932.50px;width:137.5px;height:26.25px;background:#ececee"></div>
<div class="abs" style="left:532px;top:932.50px;width:109.5px;height:26.25px;background:#fdfce5"></div>
<div class="abs" style="left:642.5px;top:932.50px;width:79.0px;height:26.25px;background:#fdfce5"></div>
<div class="abs" style="left:722.5px;top:932.50px;width:83.5px;height:26.25px;background:#fdfce5"></div>
<div class="abs" style="left:915px;top:932.50px;width:121.5px;height:26.25px;background:#fdfce5"></div>
<div class="abs" style="left:1037.5px;top:932.50px;width:125.0px;height:26.25px;background:#ececee"></div>
<div class="abs" style="left:32.5px;top:958.75px;width:140.0px;height:5.25px;background:#ececee"></div>
<div class="abs" style="left:173.5px;top:958.75px;width:137.5px;height:5.25px;background:#ececee"></div>
<div class="abs" style="left:532px;top:958.75px;width:109.5px;height:5.25px;background:#fdfce5"></div>
<div class="abs" style="left:642.5px;top:958.75px;width:79.0px;height:5.25px;background:#fdfce5"></div>
<div class="abs" style="left:722.5px;top:958.75px;width:83.5px;height:5.25px;background:#fdfce5"></div>
<div class="abs" style="left:915px;top:958.75px;width:121.5px;height:5.25px;background:#fdfce5"></div>
<div class="abs" style="left:1037.5px;top:958.75px;width:125.0px;height:5.25px;background:#ececee"></div>
<div class="abs" style="left:33px;top:380.25px;width:1129.5px;height:1px;background:#dcdde1"></div>
<div class="abs" style="left:33px;top:406.50px;width:1129.5px;height:1px;background:#dcdde1"></div>
<div class="abs" style="left:33px;top:432.75px;width:1129.5px;height:1px;background:#dcdde1"></div>
<div class="abs" style="left:33px;top:459.00px;width:1129.5px;height:1px;background:#dcdde1"></div>
<div class="abs" style="left:33px;top:485.25px;width:1129.5px;height:1px;background:#dcdde1"></div>
<div class="abs" style="left:33px;top:511.50px;width:1129.5px;height:1px;background:#dcdde1"></div>
<div class="abs" style="left:33px;top:537.75px;width:1129.5px;height:1px;background:#dcdde1"></div>
<div class="abs" style="left:33px;top:564.00px;width:1129.5px;height:1px;background:#dcdde1"></div>
<div class="abs" style="left:33px;top:590.25px;width:1129.5px;height:1px;background:#dcdde1"></div>
<div class="abs" style="left:33px;top:616.50px;width:1129.5px;height:1px;background:#dcdde1"></div>
<div class="abs" style="left:33px;top:642.75px;width:1129.5px;height:1px;background:#dcdde1"></div>
<div class="abs" style="left:33px;top:669.00px;width:1129.5px;height:1px;background:#dcdde1"></div>
<div class="abs" style="left:33px;top:695.25px;width:1129.5px;height:1px;background:#dcdde1"></div>
<div class="abs" style="left:33px;top:721.50px;width:1129.5px;height:1px;background:#dcdde1"></div>
<div class="abs" style="left:33px;top:747.75px;width:1129.5px;height:1px;background:#dcdde1"></div>
<div class="abs" style="left:33px;top:774.00px;width:1129.5px;height:1px;background:#dcdde1"></div>
<div class="abs" style="left:33px;top:800.25px;width:1129.5px;height:1px;background:#dcdde1"></div>
<div class="abs" style="left:33px;top:826.50px;width:1129.5px;height:1px;background:#dcdde1"></div>
<div class="abs" style="left:33px;top:852.75px;width:1129.5px;height:1px;background:#dcdde1"></div>
<div class="abs" style="left:33px;top:879.00px;width:1129.5px;height:1px;background:#dcdde1"></div>
<div class="abs" style="left:33px;top:905.25px;width:1129.5px;height:1px;background:#dcdde1"></div>
<div class="abs" style="left:33px;top:931.50px;width:1129.5px;height:1px;background:#dcdde1"></div>
<div class="abs" style="left:33px;top:957.75px;width:1129.5px;height:1px;background:#dcdde1"></div>
<div class="abs" style="left:1px;top:354px;width:19px;height:1px;background:#cfd0d5"></div>
<div class="abs" style="left:1px;top:380.25px;width:19px;height:1px;background:#cfd0d5"></div>
<div class="abs" style="left:1px;top:406.50px;width:19px;height:1px;background:#cfd0d5"></div>
<div class="abs" style="left:1px;top:432.75px;width:19px;height:1px;background:#cfd0d5"></div>
<div class="abs" style="left:1px;top:459.00px;width:19px;height:1px;background:#cfd0d5"></div>
<div class="abs" style="left:1px;top:485.25px;width:19px;height:1px;background:#cfd0d5"></div>
<div class="abs" style="left:1px;top:511.50px;width:19px;height:1px;background:#cfd0d5"></div>
<div class="abs" style="left:1px;top:537.75px;width:19px;height:1px;background:#cfd0d5"></div>
<div class="abs" style="left:1px;top:564.00px;width:19px;height:1px;background:#cfd0d5"></div>
<div class="abs" style="left:1px;top:590.25px;width:19px;height:1px;background:#cfd0d5"></div>
<div class="abs" style="left:1px;top:616.50px;width:19px;height:1px;background:#cfd0d5"></div>
<div class="abs" style="left:1px;top:642.75px;width:19px;height:1px;background:#cfd0d5"></div>
<div class="abs" style="left:1px;top:669.00px;width:19px;height:1px;background:#cfd0d5"></div>
<div class="abs" style="left:1px;top:695.25px;width:19px;height:1px;background:#cfd0d5"></div>
<div class="abs" style="left:1px;top:721.50px;width:19px;height:1px;background:#cfd0d5"></div>
<div class="abs" style="left:1px;top:747.75px;width:19px;height:1px;background:#cfd0d5"></div>
<div class="abs" style="left:1px;top:774.00px;width:19px;height:1px;background:#cfd0d5"></div>
<div class="abs" style="left:1px;top:800.25px;width:19px;height:1px;background:#cfd0d5"></div>
<div class="abs" style="left:1px;top:826.50px;width:19px;height:1px;background:#cfd0d5"></div>
<div class="abs" style="left:1px;top:852.75px;width:19px;height:1px;background:#cfd0d5"></div>
<div class="abs" style="left:1px;top:879.00px;width:19px;height:1px;background:#cfd0d5"></div>
<div class="abs" style="left:1px;top:905.25px;width:19px;height:1px;background:#cfd0d5"></div>
<div class="abs" style="left:1px;top:931.50px;width:19px;height:1px;background:#cfd0d5"></div>
<div class="abs" style="left:1px;top:957.75px;width:19px;height:1px;background:#cfd0d5"></div>
<div class="abs" style="left:172.5px;top:330px;width:1px;height:634px;background:#dcdde1"></div>
<div class="abs" style="left:172.5px;top:330px;width:1px;height:24.5px;background:#cfd0d6"></div>
<div class="abs" style="left:311px;top:330px;width:1px;height:634px;background:#dcdde1"></div>
<div class="abs" style="left:311px;top:330px;width:1px;height:24.5px;background:#cfd0d6"></div>
<div class="abs" style="left:451px;top:330px;width:1px;height:634px;background:#dcdde1"></div>
<div class="abs" style="left:451px;top:330px;width:1px;height:24.5px;background:#cfd0d6"></div>
<div class="abs" style="left:531px;top:330px;width:1px;height:634px;background:#dcdde1"></div>
<div class="abs" style="left:531px;top:330px;width:1px;height:24.5px;background:#cfd0d6"></div>
<div class="abs" style="left:641.5px;top:330px;width:1px;height:634px;background:#dcdde1"></div>
<div class="abs" style="left:641.5px;top:330px;width:1px;height:24.5px;background:#cfd0d6"></div>
<div class="abs" style="left:721.5px;top:330px;width:1px;height:634px;background:#dcdde1"></div>
<div class="abs" style="left:721.5px;top:330px;width:1px;height:24.5px;background:#cfd0d6"></div>
<div class="abs" style="left:806px;top:330px;width:1px;height:634px;background:#dcdde1"></div>
<div class="abs" style="left:806px;top:330px;width:1px;height:24.5px;background:#cfd0d6"></div>
<div class="abs" style="left:914px;top:330px;width:1px;height:634px;background:#dcdde1"></div>
<div class="abs" style="left:914px;top:330px;width:1px;height:24.5px;background:#cfd0d6"></div>
<div class="abs" style="left:1036.5px;top:330px;width:1px;height:634px;background:#dcdde1"></div>
<div class="abs" style="left:1036.5px;top:330px;width:1px;height:24.5px;background:#cfd0d6"></div>
<div class="abs" style="left:1162.5px;top:330px;width:1px;height:634px;background:#dcdde1"></div>
<div class="abs" style="left:1162.5px;top:330px;width:1px;height:24.5px;background:#cfd0d6"></div>
<div class="cell" style="left:36.5px;top:336px;color:#2d3040">FormName</div>
<div class="cell" style="left:177.5px;top:336px;color:#2d3040">ColumnName</div>
<div class="cell" style="left:316px;top:336px;color:#2d3040">Caption</div>
<div class="cell" style="left:456px;top:336px;color:#2d3040">Width</div>
<div class="cell" style="left:536px;top:336px;color:#2d3040">AllowSizing</div>
<div class="cell" style="left:646.5px;top:336px;color:#2d3040">Visible</div>
<div class="cell" style="left:726.5px;top:336px;color:#2d3040">Locked</div>
<div class="cell" style="left:811px;top:336px;color:#2d3040">SortOrder</div>
<div class="cell" style="left:919px;top:336px;color:#2d3040">UserEditable</div>
<div class="cell" style="left:1041.5px;top:336px;color:#2d3040">ControlName</div>
<div class="cell" style="left:36.5px;width:136.0px;overflow:hidden;padding-bottom:4px;top:362.000px;font-size:12.4px">frmSALSMain</div>
<div class="cell" style="left:177.5px;width:133.5px;overflow:hidden;padding-bottom:4px;top:361.000px;font-size:13.2px">fldCustomerID</div>
<div class="cell" style="left:316px;width:135px;overflow:hidden;padding-bottom:4px;top:361.000px;font-size:13.1px">fldCustomerID</div>
<div class="cell" style="left:451px;width:74px;text-align:right;top:362.000px;font-size:12.5px">0</div>
<div class="cell" style="left:536px;width:105.5px;overflow:hidden;padding-bottom:4px;top:362.000px;font-size:12.75px">Yes</div>
<div class="cell" style="left:646.5px;width:75.0px;overflow:hidden;padding-bottom:4px;top:362.000px;font-size:12.75px">No</div>
<div class="cell" style="left:726.5px;width:79.5px;overflow:hidden;padding-bottom:4px;top:362.000px;font-size:12.75px">Yes</div>
<div class="cell" style="left:806px;width:102px;text-align:right;top:362.000px;font-size:12.5px">-1</div>
<div class="cell" style="left:919px;width:117.5px;overflow:hidden;padding-bottom:4px;top:362.000px;font-size:12.75px">Yes</div>
<div class="cell" style="left:1041.5px;width:121.0px;overflow:hidden;padding-bottom:4px;top:361.000px;font-size:13.3px">gvCustomerList</div>
<div class="cell" style="left:36.5px;width:136.0px;overflow:hidden;padding-bottom:4px;top:388.000px;font-size:12.4px">frmSALSMain</div>
<div class="cell" style="left:177.5px;width:133.5px;overflow:hidden;padding-bottom:4px;top:387.000px;font-size:13.2px">fldCustomerParentID</div>
<div class="cell" style="left:316px;width:135px;overflow:hidden;padding-bottom:4px;top:387.000px;font-size:13.1px">fldCustomerParentID</div>
<div class="cell" style="left:451px;width:74px;text-align:right;top:388.000px;font-size:12.5px">0</div>
<div class="cell" style="left:536px;width:105.5px;overflow:hidden;padding-bottom:4px;top:388.000px;font-size:12.75px">Yes</div>
<div class="cell" style="left:646.5px;width:75.0px;overflow:hidden;padding-bottom:4px;top:388.000px;font-size:12.75px">No</div>
<div class="cell" style="left:726.5px;width:79.5px;overflow:hidden;padding-bottom:4px;top:388.000px;font-size:12.75px">Yes</div>
<div class="cell" style="left:806px;width:102px;text-align:right;top:388.000px;font-size:12.5px">-1</div>
<div class="cell" style="left:919px;width:117.5px;overflow:hidden;padding-bottom:4px;top:388.000px;font-size:12.75px">Yes</div>
<div class="cell" style="left:1041.5px;width:121.0px;overflow:hidden;padding-bottom:4px;top:387.000px;font-size:13.3px">gvCustomerList</div>
<div class="cell" style="left:36.5px;width:136.0px;overflow:hidden;padding-bottom:4px;top:414.000px;font-size:12.4px">frmSALSMain</div>
<div class="cell" style="left:177.5px;width:133.5px;overflow:hidden;padding-bottom:4px;top:413.000px;font-size:13.2px">fldDepartmentID</div>
<div class="cell" style="left:316px;width:135px;overflow:hidden;padding-bottom:4px;top:413.000px;font-size:13.1px">fldDepartmentID</div>
<div class="cell" style="left:451px;width:74px;text-align:right;top:414.000px;font-size:12.5px">0</div>
<div class="cell" style="left:536px;width:105.5px;overflow:hidden;padding-bottom:4px;top:414.000px;font-size:12.75px">Yes</div>
<div class="cell" style="left:646.5px;width:75.0px;overflow:hidden;padding-bottom:4px;top:414.000px;font-size:12.75px">No</div>
<div class="cell" style="left:726.5px;width:79.5px;overflow:hidden;padding-bottom:4px;top:414.000px;font-size:12.75px">Yes</div>
<div class="cell" style="left:806px;width:102px;text-align:right;top:414.000px;font-size:12.5px">-1</div>
<div class="cell" style="left:919px;width:117.5px;overflow:hidden;padding-bottom:4px;top:414.000px;font-size:12.75px">Yes</div>
<div class="cell" style="left:1041.5px;width:121.0px;overflow:hidden;padding-bottom:4px;top:413.000px;font-size:13.3px">gvCustomerList</div>
<div class="cell" style="left:36.5px;width:136.0px;overflow:hidden;padding-bottom:4px;top:441.000px;font-size:12.4px">frmSALSMain</div>
<div class="cell" style="left:177.5px;width:133.5px;overflow:hidden;padding-bottom:4px;top:440.000px;font-size:13.2px">fldSiteID</div>
<div class="cell" style="left:316px;width:135px;overflow:hidden;padding-bottom:4px;top:440.000px;font-size:13.1px">fldSiteID</div>
<div class="cell" style="left:451px;width:74px;text-align:right;top:441.000px;font-size:12.5px">0</div>
<div class="cell" style="left:536px;width:105.5px;overflow:hidden;padding-bottom:4px;top:441.000px;font-size:12.75px">Yes</div>
<div class="cell" style="left:646.5px;width:75.0px;overflow:hidden;padding-bottom:4px;top:441.000px;font-size:12.75px">No</div>
<div class="cell" style="left:726.5px;width:79.5px;overflow:hidden;padding-bottom:4px;top:441.000px;font-size:12.75px">Yes</div>
<div class="cell" style="left:806px;width:102px;text-align:right;top:441.000px;font-size:12.5px">-1</div>
<div class="cell" style="left:919px;width:117.5px;overflow:hidden;padding-bottom:4px;top:441.000px;font-size:12.75px">Yes</div>
<div class="cell" style="left:1041.5px;width:121.0px;overflow:hidden;padding-bottom:4px;top:440.000px;font-size:13.3px">gvCustomerList</div>
<div class="cell" style="left:36.5px;width:136.0px;overflow:hidden;padding-bottom:4px;top:467.000px;font-size:12.4px">frmSALSMain</div>
<div class="cell" style="left:177.5px;width:133.5px;overflow:hidden;padding-bottom:4px;top:466.000px;font-size:13.2px">fldTaxCode</div>
<div class="cell" style="left:316px;width:135px;overflow:hidden;padding-bottom:4px;top:466.000px;font-size:13.1px">TaxCode</div>
<div class="cell" style="left:451px;width:74px;text-align:right;top:467.000px;font-size:12.5px">75</div>
<div class="cell" style="left:536px;width:105.5px;overflow:hidden;padding-bottom:4px;top:467.000px;font-size:12.75px">Yes</div>
<div class="cell" style="left:646.5px;width:75.0px;overflow:hidden;padding-bottom:4px;top:467.000px;font-size:12.75px">No</div>
<div class="cell" style="left:726.5px;width:79.5px;overflow:hidden;padding-bottom:4px;top:467.000px;font-size:12.75px">Yes</div>
<div class="cell" style="left:806px;width:102px;text-align:right;top:467.000px;font-size:12.5px">-1</div>
<div class="cell" style="left:919px;width:117.5px;overflow:hidden;padding-bottom:4px;top:467.000px;font-size:12.75px">Yes</div>
<div class="cell" style="left:1041.5px;width:121.0px;overflow:hidden;padding-bottom:4px;top:466.000px;font-size:13.3px">gvCustomerList</div>
<div class="cell" style="left:36.5px;width:136.0px;overflow:hidden;padding-bottom:4px;top:493.000px;font-size:12.4px">frmSALSMain</div>
<div class="cell" style="left:177.5px;width:133.5px;overflow:hidden;padding-bottom:4px;top:492.000px;font-size:13.2px">fldCustomerCode</div>
<div class="cell" style="left:316px;width:135px;overflow:hidden;padding-bottom:4px;top:492.000px;font-size:13.1px">CustomerCode</div>
<div class="cell" style="left:451px;width:74px;text-align:right;top:493.000px;font-size:12.5px">131</div>
<div class="cell" style="left:536px;width:105.5px;overflow:hidden;padding-bottom:4px;top:493.000px;font-size:12.75px">Yes</div>
<div class="cell" style="left:646.5px;width:75.0px;overflow:hidden;padding-bottom:4px;top:493.000px;font-size:12.75px">Yes</div>
<div class="cell" style="left:726.5px;width:79.5px;overflow:hidden;padding-bottom:4px;top:493.000px;font-size:12.75px">Yes</div>
<div class="cell" style="left:806px;width:102px;text-align:right;top:493.000px;font-size:12.5px">0</div>
<div class="cell" style="left:919px;width:117.5px;overflow:hidden;padding-bottom:4px;top:493.000px;font-size:12.75px">Yes</div>
<div class="cell" style="left:1041.5px;width:121.0px;overflow:hidden;padding-bottom:4px;top:492.000px;font-size:13.3px">gvCustomerList</div>
<div class="cell" style="left:36.5px;width:136.0px;overflow:hidden;padding-bottom:4px;top:519.000px;font-size:12.4px">frmSALSMain</div>
<div class="cell" style="left:177.5px;width:133.5px;overflow:hidden;padding-bottom:4px;top:518.000px;font-size:13.2px">fldCustomerType</div>
<div class="cell" style="left:316px;width:135px;overflow:hidden;padding-bottom:4px;top:518.000px;font-size:13.1px">CustomerType</div>
<div class="cell" style="left:451px;width:74px;text-align:right;top:519.000px;font-size:12.5px">109</div>
<div class="cell" style="left:536px;width:105.5px;overflow:hidden;padding-bottom:4px;top:519.000px;font-size:12.75px">Yes</div>
<div class="cell" style="left:646.5px;width:75.0px;overflow:hidden;padding-bottom:4px;top:519.000px;font-size:12.75px">Yes</div>
<div class="cell" style="left:726.5px;width:79.5px;overflow:hidden;padding-bottom:4px;top:519.000px;font-size:12.75px">Yes</div>
<div class="cell" style="left:806px;width:102px;text-align:right;top:519.000px;font-size:12.5px">1</div>
<div class="cell" style="left:919px;width:117.5px;overflow:hidden;padding-bottom:4px;top:519.000px;font-size:12.75px">Yes</div>
<div class="cell" style="left:1041.5px;width:121.0px;overflow:hidden;padding-bottom:4px;top:518.000px;font-size:13.3px">gvCustomerList</div>
<div class="cell" style="left:36.5px;width:136.0px;overflow:hidden;padding-bottom:4px;top:546.000px;font-size:12.4px">frmSALSMain</div>
<div class="cell" style="left:177.5px;width:133.5px;overflow:hidden;padding-bottom:4px;top:545.000px;font-size:13.2px">fldCustomerName</div>
<div class="cell" style="left:316px;width:135px;overflow:hidden;padding-bottom:4px;top:545.000px;font-size:13.1px">CustomerName</div>
<div class="cell" style="left:451px;width:74px;text-align:right;top:546.000px;font-size:12.5px">335</div>
<div class="cell" style="left:536px;width:105.5px;overflow:hidden;padding-bottom:4px;top:546.000px;font-size:12.75px">Yes</div>
<div class="cell" style="left:646.5px;width:75.0px;overflow:hidden;padding-bottom:4px;top:546.000px;font-size:12.75px">Yes</div>
<div class="cell" style="left:726.5px;width:79.5px;overflow:hidden;padding-bottom:4px;top:546.000px;font-size:12.75px">Yes</div>
<div class="cell" style="left:806px;width:102px;text-align:right;top:546.000px;font-size:12.5px">2</div>
<div class="cell" style="left:919px;width:117.5px;overflow:hidden;padding-bottom:4px;top:546.000px;font-size:12.75px">Yes</div>
<div class="cell" style="left:1041.5px;width:121.0px;overflow:hidden;padding-bottom:4px;top:545.000px;font-size:13.3px">gvCustomerList</div>
<div class="cell" style="left:36.5px;width:136.0px;overflow:hidden;padding-bottom:4px;top:572.000px;font-size:12.4px">frmSALSMain</div>
<div class="cell" style="left:177.5px;width:133.5px;overflow:hidden;padding-bottom:4px;top:571.000px;font-size:13.2px">fldDepartment</div>
<div class="cell" style="left:316px;width:135px;overflow:hidden;padding-bottom:4px;top:571.000px;font-size:13.1px">Department</div>
<div class="cell" style="left:451px;width:74px;text-align:right;top:572.000px;font-size:12.5px">89</div>
<div class="cell" style="left:536px;width:105.5px;overflow:hidden;padding-bottom:4px;top:572.000px;font-size:12.75px">Yes</div>
<div class="cell" style="left:646.5px;width:75.0px;overflow:hidden;padding-bottom:4px;top:572.000px;font-size:12.75px">Yes</div>
<div class="cell" style="left:726.5px;width:79.5px;overflow:hidden;padding-bottom:4px;top:572.000px;font-size:12.75px">Yes</div>
<div class="cell" style="left:806px;width:102px;text-align:right;top:572.000px;font-size:12.5px">3</div>
<div class="cell" style="left:919px;width:117.5px;overflow:hidden;padding-bottom:4px;top:572.000px;font-size:12.75px">Yes</div>
<div class="cell" style="left:1041.5px;width:121.0px;overflow:hidden;padding-bottom:4px;top:571.000px;font-size:13.3px">gvCustomerList</div>
<div class="cell" style="left:36.5px;width:136.0px;overflow:hidden;padding-bottom:4px;top:598.000px;font-size:12.4px">frmSALSMain</div>
<div class="cell" style="left:177.5px;width:133.5px;overflow:hidden;padding-bottom:4px;top:597.000px;font-size:13.2px">fldDeptName</div>
<div class="cell" style="left:316px;width:135px;overflow:hidden;padding-bottom:4px;top:597.000px;font-size:13.1px">DeptName</div>
<div class="cell" style="left:451px;width:74px;text-align:right;top:598.000px;font-size:12.5px">75</div>
<div class="cell" style="left:536px;width:105.5px;overflow:hidden;padding-bottom:4px;top:598.000px;font-size:12.75px">Yes</div>
<div class="cell" style="left:646.5px;width:75.0px;overflow:hidden;padding-bottom:4px;top:598.000px;font-size:12.75px">Yes</div>
<div class="cell" style="left:726.5px;width:79.5px;overflow:hidden;padding-bottom:4px;top:598.000px;font-size:12.75px">Yes</div>
<div class="cell" style="left:806px;width:102px;text-align:right;top:598.000px;font-size:12.5px">4</div>
<div class="cell" style="left:919px;width:117.5px;overflow:hidden;padding-bottom:4px;top:598.000px;font-size:12.75px">Yes</div>
<div class="cell" style="left:1041.5px;width:121.0px;overflow:hidden;padding-bottom:4px;top:597.000px;font-size:13.3px">gvCustomerList</div>
<div class="cell" style="left:36.5px;width:136.0px;overflow:hidden;padding-bottom:4px;top:624.000px;font-size:12.4px">frmSALSMain</div>
<div class="cell" style="left:177.5px;width:133.5px;overflow:hidden;padding-bottom:4px;top:623.000px;font-size:13.2px">fldSiteDescription</div>
<div class="cell" style="left:316px;width:135px;overflow:hidden;padding-bottom:4px;top:623.000px;font-size:13.1px">SiteDescription</div>
<div class="cell" style="left:451px;width:74px;text-align:right;top:624.000px;font-size:12.5px">111</div>
<div class="cell" style="left:536px;width:105.5px;overflow:hidden;padding-bottom:4px;top:624.000px;font-size:12.75px">Yes</div>
<div class="cell" style="left:646.5px;width:75.0px;overflow:hidden;padding-bottom:4px;top:624.000px;font-size:12.75px">Yes</div>
<div class="cell" style="left:726.5px;width:79.5px;overflow:hidden;padding-bottom:4px;top:624.000px;font-size:12.75px">Yes</div>
<div class="cell" style="left:806px;width:102px;text-align:right;top:624.000px;font-size:12.5px">5</div>
<div class="cell" style="left:919px;width:117.5px;overflow:hidden;padding-bottom:4px;top:624.000px;font-size:12.75px">Yes</div>
<div class="cell" style="left:1041.5px;width:121.0px;overflow:hidden;padding-bottom:4px;top:623.000px;font-size:13.3px">gvCustomerList</div>
<div class="cell" style="left:36.5px;width:136.0px;overflow:hidden;padding-bottom:4px;top:651.000px;font-size:12.4px">frmSALSMain</div>
<div class="cell" style="left:177.5px;width:133.5px;overflow:hidden;padding-bottom:4px;top:650.000px;font-size:13.2px">fldCustomerCreditL...</div>
<div class="cell" style="left:316px;width:135px;overflow:hidden;padding-bottom:4px;top:650.000px;font-size:13.1px">CustomerCreditLimit</div>
<div class="cell" style="left:451px;width:74px;text-align:right;top:651.000px;font-size:12.5px">146</div>
<div class="cell" style="left:536px;width:105.5px;overflow:hidden;padding-bottom:4px;top:651.000px;font-size:12.75px">Yes</div>
<div class="cell" style="left:646.5px;width:75.0px;overflow:hidden;padding-bottom:4px;top:651.000px;font-size:12.75px">Yes</div>
<div class="cell" style="left:726.5px;width:79.5px;overflow:hidden;padding-bottom:4px;top:651.000px;font-size:12.75px">Yes</div>
<div class="cell" style="left:806px;width:102px;text-align:right;top:651.000px;font-size:12.5px">6</div>
<div class="cell" style="left:919px;width:117.5px;overflow:hidden;padding-bottom:4px;top:651.000px;font-size:12.75px">Yes</div>
<div class="cell" style="left:1041.5px;width:121.0px;overflow:hidden;padding-bottom:4px;top:650.000px;font-size:13.3px">gvCustomerList</div>
<div class="cell" style="left:36.5px;width:136.0px;overflow:hidden;padding-bottom:4px;top:677.000px;font-size:12.4px">frmSALSMain</div>
<div class="cell" style="left:177.5px;width:133.5px;overflow:hidden;padding-bottom:4px;top:676.000px;font-size:13.2px">fldCustomerWebSite</div>
<div class="cell" style="left:316px;width:135px;overflow:hidden;padding-bottom:4px;top:676.000px;font-size:13.1px">CustomerWebSite</div>
<div class="cell" style="left:451px;width:74px;text-align:right;top:677.000px;font-size:12.5px">121</div>
<div class="cell" style="left:536px;width:105.5px;overflow:hidden;padding-bottom:4px;top:677.000px;font-size:12.75px">Yes</div>
<div class="cell" style="left:646.5px;width:75.0px;overflow:hidden;padding-bottom:4px;top:677.000px;font-size:12.75px">Yes</div>
<div class="cell" style="left:726.5px;width:79.5px;overflow:hidden;padding-bottom:4px;top:677.000px;font-size:12.75px">Yes</div>
<div class="cell" style="left:806px;width:102px;text-align:right;top:677.000px;font-size:12.5px">7</div>
<div class="cell" style="left:919px;width:117.5px;overflow:hidden;padding-bottom:4px;top:677.000px;font-size:12.75px">Yes</div>
<div class="cell" style="left:1041.5px;width:121.0px;overflow:hidden;padding-bottom:4px;top:676.000px;font-size:13.3px">gvCustomerList</div>
<div class="cell" style="left:36.5px;width:136.0px;overflow:hidden;padding-bottom:4px;top:703.000px;font-size:12.4px">frmSALSMain</div>
<div class="cell" style="left:177.5px;width:133.5px;overflow:hidden;padding-bottom:4px;top:702.000px;font-size:13.2px">fldCustomerPhone...</div>
<div class="cell" style="left:316px;width:135px;overflow:hidden;padding-bottom:4px;top:702.000px;font-size:13.1px">CustomerPhoneNu...</div>
<div class="cell" style="left:451px;width:74px;text-align:right;top:703.000px;font-size:12.5px">147</div>
<div class="cell" style="left:536px;width:105.5px;overflow:hidden;padding-bottom:4px;top:703.000px;font-size:12.75px">Yes</div>
<div class="cell" style="left:646.5px;width:75.0px;overflow:hidden;padding-bottom:4px;top:703.000px;font-size:12.75px">Yes</div>
<div class="cell" style="left:726.5px;width:79.5px;overflow:hidden;padding-bottom:4px;top:703.000px;font-size:12.75px">Yes</div>
<div class="cell" style="left:806px;width:102px;text-align:right;top:703.000px;font-size:12.5px">8</div>
<div class="cell" style="left:919px;width:117.5px;overflow:hidden;padding-bottom:4px;top:703.000px;font-size:12.75px">Yes</div>
<div class="cell" style="left:1041.5px;width:121.0px;overflow:hidden;padding-bottom:4px;top:702.000px;font-size:13.3px">gvCustomerList</div>
<div class="cell" style="left:36.5px;width:136.0px;overflow:hidden;padding-bottom:4px;top:729.000px;font-size:12.4px">frmSALSMain</div>
<div class="cell" style="left:177.5px;width:133.5px;overflow:hidden;padding-bottom:4px;top:728.000px;font-size:13.2px">fldCustomerVATNo</div>
<div class="cell" style="left:316px;width:135px;overflow:hidden;padding-bottom:4px;top:728.000px;font-size:13.1px">CustomerVATNo</div>
<div class="cell" style="left:451px;width:74px;text-align:right;top:729.000px;font-size:12.5px">132</div>
<div class="cell" style="left:536px;width:105.5px;overflow:hidden;padding-bottom:4px;top:729.000px;font-size:12.75px">Yes</div>
<div class="cell" style="left:646.5px;width:75.0px;overflow:hidden;padding-bottom:4px;top:729.000px;font-size:12.75px">Yes</div>
<div class="cell" style="left:726.5px;width:79.5px;overflow:hidden;padding-bottom:4px;top:729.000px;font-size:12.75px">Yes</div>
<div class="cell" style="left:806px;width:102px;text-align:right;top:729.000px;font-size:12.5px">9</div>
<div class="cell" style="left:919px;width:117.5px;overflow:hidden;padding-bottom:4px;top:729.000px;font-size:12.75px">Yes</div>
<div class="cell" style="left:1041.5px;width:121.0px;overflow:hidden;padding-bottom:4px;top:728.000px;font-size:13.3px">gvCustomerList</div>
<div class="cell" style="left:36.5px;width:136.0px;overflow:hidden;padding-bottom:4px;top:756.000px;font-size:12.4px">frmSALSMain</div>
<div class="cell" style="left:177.5px;width:133.5px;overflow:hidden;padding-bottom:4px;top:755.000px;font-size:13.2px">fldCustomerRegNo</div>
<div class="cell" style="left:316px;width:135px;overflow:hidden;padding-bottom:4px;top:755.000px;font-size:13.1px">CustomerRegNo</div>
<div class="cell" style="left:451px;width:74px;text-align:right;top:756.000px;font-size:12.5px">121</div>
<div class="cell" style="left:536px;width:105.5px;overflow:hidden;padding-bottom:4px;top:756.000px;font-size:12.75px">Yes</div>
<div class="cell" style="left:646.5px;width:75.0px;overflow:hidden;padding-bottom:4px;top:756.000px;font-size:12.75px">Yes</div>
<div class="cell" style="left:726.5px;width:79.5px;overflow:hidden;padding-bottom:4px;top:756.000px;font-size:12.75px">Yes</div>
<div class="cell" style="left:806px;width:102px;text-align:right;top:756.000px;font-size:12.5px">10</div>
<div class="cell" style="left:919px;width:117.5px;overflow:hidden;padding-bottom:4px;top:756.000px;font-size:12.75px">Yes</div>
<div class="cell" style="left:1041.5px;width:121.0px;overflow:hidden;padding-bottom:4px;top:755.000px;font-size:13.3px">gvCustomerList</div>
<div class="cell" style="left:36.5px;width:136.0px;overflow:hidden;padding-bottom:4px;top:782.000px;font-size:12.4px">frmSALSMain</div>
<div class="cell" style="left:177.5px;width:133.5px;overflow:hidden;padding-bottom:4px;top:781.000px;font-size:13.2px">fldTaxRate</div>
<div class="cell" style="left:316px;width:135px;overflow:hidden;padding-bottom:4px;top:781.000px;font-size:13.1px">TaxRate</div>
<div class="cell" style="left:451px;width:74px;text-align:right;top:782.000px;font-size:12.5px">75</div>
<div class="cell" style="left:536px;width:105.5px;overflow:hidden;padding-bottom:4px;top:782.000px;font-size:12.75px">Yes</div>
<div class="cell" style="left:646.5px;width:75.0px;overflow:hidden;padding-bottom:4px;top:782.000px;font-size:12.75px">Yes</div>
<div class="cell" style="left:726.5px;width:79.5px;overflow:hidden;padding-bottom:4px;top:782.000px;font-size:12.75px">Yes</div>
<div class="cell" style="left:806px;width:102px;text-align:right;top:782.000px;font-size:12.5px">11</div>
<div class="cell" style="left:919px;width:117.5px;overflow:hidden;padding-bottom:4px;top:782.000px;font-size:12.75px">Yes</div>
<div class="cell" style="left:1041.5px;width:121.0px;overflow:hidden;padding-bottom:4px;top:781.000px;font-size:13.3px">gvCustomerList</div>
<div class="cell" style="left:36.5px;width:136.0px;overflow:hidden;padding-bottom:4px;top:808.000px;font-size:12.4px">frmSALSMain</div>
<div class="cell" style="left:177.5px;width:133.5px;overflow:hidden;padding-bottom:4px;top:807.000px;font-size:13.2px">fldCurrency</div>
<div class="cell" style="left:316px;width:135px;overflow:hidden;padding-bottom:4px;top:807.000px;font-size:13.1px">Currency</div>
<div class="cell" style="left:451px;width:74px;text-align:right;top:808.000px;font-size:12.5px">102</div>
<div class="cell" style="left:536px;width:105.5px;overflow:hidden;padding-bottom:4px;top:808.000px;font-size:12.75px">Yes</div>
<div class="cell" style="left:646.5px;width:75.0px;overflow:hidden;padding-bottom:4px;top:808.000px;font-size:12.75px">Yes</div>
<div class="cell" style="left:726.5px;width:79.5px;overflow:hidden;padding-bottom:4px;top:808.000px;font-size:12.75px">Yes</div>
<div class="cell" style="left:806px;width:102px;text-align:right;top:808.000px;font-size:12.5px">12</div>
<div class="cell" style="left:919px;width:117.5px;overflow:hidden;padding-bottom:4px;top:808.000px;font-size:12.75px">Yes</div>
<div class="cell" style="left:1041.5px;width:121.0px;overflow:hidden;padding-bottom:4px;top:807.000px;font-size:13.3px">gvCustomerList</div>
<div class="cell" style="left:36.5px;width:136.0px;overflow:hidden;padding-bottom:4px;top:834.000px;font-size:12.4px">frmSALSMain</div>
<div class="cell" style="left:177.5px;width:133.5px;overflow:hidden;padding-bottom:4px;top:833.000px;font-size:13.2px">fldIsDebtor</div>
<div class="cell" style="left:316px;width:135px;overflow:hidden;padding-bottom:4px;top:833.000px;font-size:13.1px">IsDebtor</div>
<div class="cell" style="left:451px;width:74px;text-align:right;top:834.000px;font-size:12.5px">75</div>
<div class="cell" style="left:536px;width:105.5px;overflow:hidden;padding-bottom:4px;top:834.000px;font-size:12.75px">Yes</div>
<div class="cell" style="left:646.5px;width:75.0px;overflow:hidden;padding-bottom:4px;top:834.000px;font-size:12.75px">Yes</div>
<div class="cell" style="left:726.5px;width:79.5px;overflow:hidden;padding-bottom:4px;top:834.000px;font-size:12.75px">Yes</div>
<div class="cell" style="left:806px;width:102px;text-align:right;top:834.000px;font-size:12.5px">13</div>
<div class="cell" style="left:919px;width:117.5px;overflow:hidden;padding-bottom:4px;top:834.000px;font-size:12.75px">Yes</div>
<div class="cell" style="left:1041.5px;width:121.0px;overflow:hidden;padding-bottom:4px;top:833.000px;font-size:13.3px">gvCustomerList</div>
<div class="cell" style="left:36.5px;width:136.0px;overflow:hidden;padding-bottom:4px;top:861.000px;font-size:12.4px">frmSALSMain</div>
<div class="cell" style="left:177.5px;width:133.5px;overflow:hidden;padding-bottom:4px;top:860.000px;font-size:13.2px">fldAccountCode</div>
<div class="cell" style="left:316px;width:135px;overflow:hidden;padding-bottom:4px;top:860.000px;font-size:13.1px">AccountCode</div>
<div class="cell" style="left:451px;width:74px;text-align:right;top:861.000px;font-size:12.5px">119</div>
<div class="cell" style="left:536px;width:105.5px;overflow:hidden;padding-bottom:4px;top:861.000px;font-size:12.75px">Yes</div>
<div class="cell" style="left:646.5px;width:75.0px;overflow:hidden;padding-bottom:4px;top:861.000px;font-size:12.75px">Yes</div>
<div class="cell" style="left:726.5px;width:79.5px;overflow:hidden;padding-bottom:4px;top:861.000px;font-size:12.75px">Yes</div>
<div class="cell" style="left:806px;width:102px;text-align:right;top:861.000px;font-size:12.5px">14</div>
<div class="cell" style="left:919px;width:117.5px;overflow:hidden;padding-bottom:4px;top:861.000px;font-size:12.75px">Yes</div>
<div class="cell" style="left:1041.5px;width:121.0px;overflow:hidden;padding-bottom:4px;top:860.000px;font-size:13.3px">gvCustomerList</div>
<div class="cell" style="left:36.5px;width:136.0px;overflow:hidden;padding-bottom:4px;top:887.000px;font-size:12.4px">frmSALSMain</div>
<div class="cell" style="left:177.5px;width:133.5px;overflow:hidden;padding-bottom:4px;top:886.000px;font-size:13.2px">fldIsConsolidated</div>
<div class="cell" style="left:316px;width:135px;overflow:hidden;padding-bottom:4px;top:886.000px;font-size:13.1px">IsConsolidated</div>
<div class="cell" style="left:451px;width:74px;text-align:right;top:887.000px;font-size:12.5px">127</div>
<div class="cell" style="left:536px;width:105.5px;overflow:hidden;padding-bottom:4px;top:887.000px;font-size:12.75px">Yes</div>
<div class="cell" style="left:646.5px;width:75.0px;overflow:hidden;padding-bottom:4px;top:887.000px;font-size:12.75px">Yes</div>
<div class="cell" style="left:726.5px;width:79.5px;overflow:hidden;padding-bottom:4px;top:887.000px;font-size:12.75px">Yes</div>
<div class="cell" style="left:806px;width:102px;text-align:right;top:887.000px;font-size:12.5px">15</div>
<div class="cell" style="left:919px;width:117.5px;overflow:hidden;padding-bottom:4px;top:887.000px;font-size:12.75px">Yes</div>
<div class="cell" style="left:1041.5px;width:121.0px;overflow:hidden;padding-bottom:4px;top:886.000px;font-size:13.3px">gvCustomerList</div>
<div class="cell" style="left:36.5px;width:136.0px;overflow:hidden;padding-bottom:4px;top:913.000px;font-size:12.4px">frmSALSMain</div>
<div class="cell" style="left:177.5px;width:133.5px;overflow:hidden;padding-bottom:4px;top:912.000px;font-size:13.2px">fldCreditCheck</div>
<div class="cell" style="left:316px;width:135px;overflow:hidden;padding-bottom:4px;top:912.000px;font-size:13.1px">CreditCheck</div>
<div class="cell" style="left:451px;width:74px;text-align:right;top:913.000px;font-size:12.5px">114</div>
<div class="cell" style="left:536px;width:105.5px;overflow:hidden;padding-bottom:4px;top:913.000px;font-size:12.75px">Yes</div>
<div class="cell" style="left:646.5px;width:75.0px;overflow:hidden;padding-bottom:4px;top:913.000px;font-size:12.75px">Yes</div>
<div class="cell" style="left:726.5px;width:79.5px;overflow:hidden;padding-bottom:4px;top:913.000px;font-size:12.75px">Yes</div>
<div class="cell" style="left:806px;width:102px;text-align:right;top:913.000px;font-size:12.5px">16</div>
<div class="cell" style="left:919px;width:117.5px;overflow:hidden;padding-bottom:4px;top:913.000px;font-size:12.75px">Yes</div>
<div class="cell" style="left:1041.5px;width:121.0px;overflow:hidden;padding-bottom:4px;top:912.000px;font-size:13.3px">gvCustomerList</div>
<div class="cell" style="left:36.5px;width:136.0px;overflow:hidden;padding-bottom:4px;top:939.000px;font-size:12.4px">frmSALSMain</div>
<div class="cell" style="left:177.5px;width:133.5px;overflow:hidden;padding-bottom:4px;top:938.000px;font-size:13.2px">fldCreditCheckDesc</div>
<div class="cell" style="left:316px;width:135px;overflow:hidden;padding-bottom:4px;top:938.000px;font-size:13.1px">CreditCheckDesc</div>
<div class="cell" style="left:451px;width:74px;text-align:right;top:939.000px;font-size:12.5px">124</div>
<div class="cell" style="left:536px;width:105.5px;overflow:hidden;padding-bottom:4px;top:939.000px;font-size:12.75px">Yes</div>
<div class="cell" style="left:646.5px;width:75.0px;overflow:hidden;padding-bottom:4px;top:939.000px;font-size:12.75px">Yes</div>
<div class="cell" style="left:726.5px;width:79.5px;overflow:hidden;padding-bottom:4px;top:939.000px;font-size:12.75px">Yes</div>
<div class="cell" style="left:806px;width:102px;text-align:right;top:939.000px;font-size:12.5px">17</div>
<div class="cell" style="left:919px;width:117.5px;overflow:hidden;padding-bottom:4px;top:939.000px;font-size:12.75px">Yes</div>
<div class="cell" style="left:1041.5px;width:121.0px;overflow:hidden;padding-bottom:4px;top:938.000px;font-size:13.3px">gvCustomerList</div>
<div class="abs" style="left:450px;top:328.5px;width:83px;height:633px;border:3px solid #4369d5"></div>
<div class="abs" style="left:450px;top:353px;width:83px;height:3px;background:#4369d5"></div>
<div class="abs" style="left:1897px;top:233px;width:22px;height:731px;background:#f3f3f6"></div>
<div class="abs" style="left:1904px;top:241px;width:0;height:0;border-left:4.5px solid transparent;border-right:4.5px solid transparent;border-bottom:5px solid #777a86"></div>
<div class="abs" style="left:1904px;top:255px;width:8.5px;height:398px;border:1px solid #a3a4ac;border-radius:5px;background:linear-gradient(90deg,#d8d9de,#ededf0)"></div>
<div class="abs" style="left:1904px;top:951px;width:0;height:0;border-left:4.5px solid transparent;border-right:4.5px solid transparent;border-top:5px solid #777a86"></div>
<div class="abs" style="left:0;top:0;width:1px;height:1030px;background:#9a9ba3"></div>
<div class="abs" style="left:1919px;top:0;width:1px;height:1030px;background:#8e8f97"></div>
<div class="abs" style="left:1px;top:964px;width:1918px;height:31px;background:#e9eaee;border-top:1px solid #c3c4ca"></div>
<svg class="abs" style="left:9.5px;top:975px" width="12" height="11"><path d="M1.6 1.8 L10.4 9.6 M10.4 1.8 L1.6 9.6" stroke="#22242e" stroke-width="2.8"/></svg>
<div class="abs" style="left:31px;top:972px;width:16px;height:17px;border:1px solid #a6a7ae;box-shadow:inset 0 0 0 2px #dfe0e5;background:#fbfbfc"></div>
<svg class="abs" style="left:32px;top:970px" width="16" height="18"><path d="M2 10 L6 16 L15 1" fill="none" stroke="#20222c" stroke-width="1.8"/></svg>
<div class="t" style="left:52px;top:973px;font-size:13.5px;color:#22252f">Contains([Description], 'sales - customers - list')</div>
<div class="abs" style="left:347px;top:978px;width:0;height:0;border-left:4px solid transparent;border-right:4px solid transparent;border-top:5px solid #22242e"></div>
<div class="t" style="left:1854px;top:975px;font-size:13.2px;color:#22252f">Edit Filter</div>
<div class="abs" style="left:0;top:995px;width:1920px;height:35px;background:linear-gradient(#d6d7dc,#cacbd2);border-top:1px solid #aeafb6;border-left:1px solid #8e8f97;border-right:1px solid #8e8f97"></div>
<div class="t" style="left:9px;top:1007px;font-size:13.3px;color:#363948">Open Windows</div>
<div class="abs" style="left:104px;top:1011px;width:0;height:0;border-left:4px solid transparent;border-right:4px solid transparent;border-top:4.5px solid #2d3040"></div>
<div class="abs" style="left:1770px;top:1002px;width:1px;height:24px;background:#b5b6bd"></div>
<div class="abs" style="left:1784px;top:1000.5px;width:124px;height:26px;background:#fff;border:1px solid #c6c7cd;border-top-color:#a9aab1"></div>
<div class="t" style="left:1789.5px;top:1008px;font-size:13.5px;color:#22252f">07 Nov 2022</div>
<div class="abs" style="left:1894px;top:1005px;width:0;height:0;border-left:4.5px solid transparent;border-right:4.5px solid transparent;border-bottom:5px solid #22242e"></div>
<div class="abs" style="left:1894px;top:1019px;width:0;height:0;border-left:4.5px solid transparent;border-right:4.5px solid transparent;border-top:5px solid #22242e"></div>
</body></html>
